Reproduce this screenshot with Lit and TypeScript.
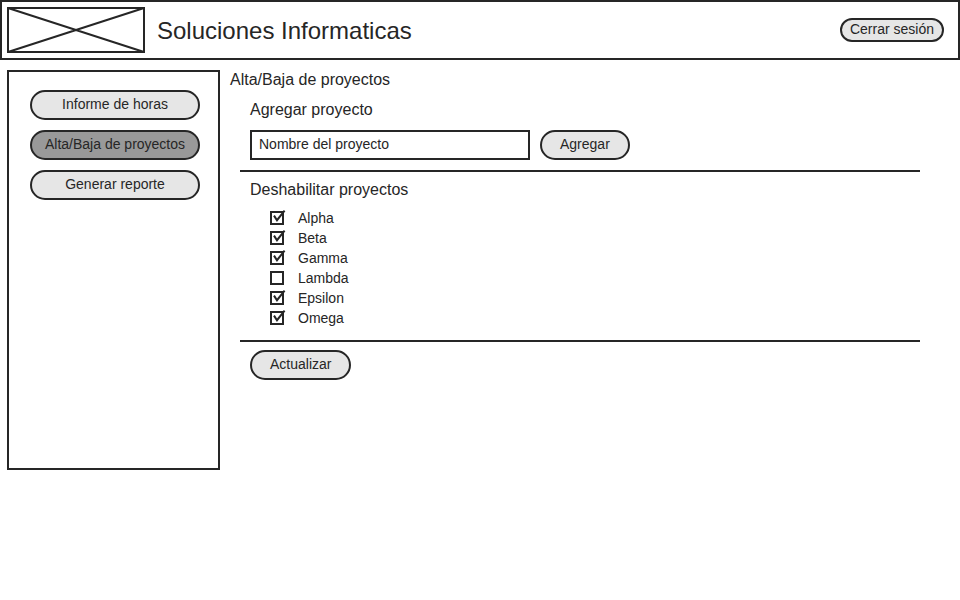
import { LitElement, html, css, svg, nothing } from "lit";
import { customElement, state } from "lit/decorators.js";

interface Project {
  id: string;
  name: string;
  checked: boolean;
}

const tick = html`<svg class="tick" viewBox="0 0 16 16" aria-hidden="true">
  ${svg`<path d="M4 6.6 L7 11.2 L14.6 1.6" />`}
</svg>`;

@customElement("app-root")
export class AppRoot extends LitElement {
  static styles = css`
    :host {
      --ink: #262626;
      --fill: #e6e6e6;
      display: block;
      color: var(--ink);
      font: 14px/20px "Liberation Sans", Arial, sans-serif;
    }
    * {
      box-sizing: border-box;
    }
    h1,
    h2,
    h3,
    ul {
      margin: 0;
      padding: 0;
      font-weight: 400;
    }
    .header {
      display: flex;
      align-items: center;
      gap: 12px;
      height: 60px;
      padding: 0 14px 0 5px;
      border: 2px solid var(--ink);
    }
    .logo {
      width: 138px;
      height: 46px;
      fill: none;
      stroke: var(--ink);
      stroke-width: 2;
    }
    .title {
      flex: 1;
      padding-top: 2px;
      font-size: 24px;
      line-height: 28px;
    }
    .btn {
      height: 30px;
      padding: 0 18px 2px;
      border: 2px solid var(--ink);
      border-radius: 15px;
      background: var(--fill);
      color: inherit;
      font: inherit;
      text-align: center;
      white-space: nowrap;
      cursor: pointer;
    }
    .btn.small {
      height: 24px;
      padding: 0 8px 2px;
      border-radius: 12px;
      line-height: 18px;
    }
    .btn.current {
      background: #999;
    }
    .body {
      display: flex;
      align-items: flex-start;
      gap: 10px;
      padding: 10px 40px 20px 7px;
    }
    .sidebar {
      display: flex;
      flex-direction: column;
      gap: 10px;
      flex: 0 0 213px;
      min-height: 400px;
      padding: 18px 18px 18px 21px;
      border: 2px solid var(--ink);
    }
    .sidebar .btn {
      padding-inline: 0;
    }
    .main {
      flex: 1;
      min-width: 0;
    }
    h2,
    h3 {
      font-size: 16px;
      line-height: 20px;
    }
    .section {
      margin-left: 10px;
      padding: 10px;
      border-bottom: 2px solid var(--ink);
    }
    .section:last-child {
      border-bottom: 0;
    }
    .section.list,
    .section.actions {
      padding-top: 8px;
    }
    .row {
      display: flex;
      gap: 10px;
      margin-top: 10px;
    }
    .field {
      flex: 0 1 280px;
      min-width: 0;
      height: 30px;
      padding: 0 7px 2px;
      border: 2px solid var(--ink);
      border-radius: 0;
      background: #fff;
      color: inherit;
      font: inherit;
    }
    .projects {
      margin: 8px 0 2px 20px;
      list-style: none;
    }
    .item {
      display: flex;
      align-items: center;
      height: 20px;
    }
    .item label {
      padding-left: 14px;
    }
    .check {
      display: grid;
      position: relative;
      width: 14px;
      height: 14px;
    }
    .check input {
      appearance: none;
      width: 14px;
      height: 14px;
      margin: 0;
      border: 2px solid var(--ink);
      background: #fff;
    }
    .tick {
      position: absolute;
      left: 0;
      bottom: 0;
      width: 16px;
      height: 16px;
      fill: none;
      stroke: var(--ink);
      stroke-width: 2;
      pointer-events: none;
    }
  `;

  @state() private projects: Project[] = [
    { id: "alpha", name: "Alpha", checked: true },
    { id: "beta", name: "Beta", checked: true },
    { id: "gamma", name: "Gamma", checked: true },
    { id: "lambda", name: "Lambda", checked: false },
    { id: "epsilon", name: "Epsilon", checked: true },
    { id: "omega", name: "Omega", checked: true },
  ];

  private toggle(id: string) {
    this.projects = this.projects.map((p) =>
      p.id === id ? { ...p, checked: !p.checked } : p
    );
  }

  render() {
    return html`
      <header class="header">
        <svg class="logo" viewBox="0 0 138 46" aria-hidden="true">
          <rect x="1" y="1" width="136" height="44" />
          <path d="M1 1 L137 45 M137 1 L1 45" />
        </svg>
        <h1 class="title">Soluciones Informaticas</h1>
        <button class="btn small" type="button">Cerrar sesión</button>
      </header>
      <div class="body">
        <nav class="sidebar">
          <button class="btn" type="button">Informe de horas</button>
          <button class="btn current" type="button" aria-current="page">Alta/Baja de proyectos</button>
          <button class="btn" type="button">Generar reporte</button>
        </nav>
        <main class="main">
          <h2>Alta/Baja de proyectos</h2>
          <section class="section">
            <h3><label for="name">Agregar proyecto</label></h3>
            <div class="row">
              <input class="field" id="name" type="text" value="Nombre del proyecto" />
              <button class="btn" type="button">Agregar</button>
            </div>
          </section>
          <section class="section list">
            <h3>Deshabilitar proyectos</h3>
            <ul class="projects">
              ${this.projects.map(
                (p) => html`<li class="item">
                  <span class="check">
                    <input
                      id=${p.id}
                      type="checkbox"
                      .checked=${p.checked}
                      @change=${() => this.toggle(p.id)}
                    />
                    ${p.checked ? tick : nothing}
                  </span>
                  <label for=${p.id}>${p.name}</label>
                </li>`
              )}
            </ul>
          </section>
          <section class="section actions">
            <button class="btn" type="button">Actualizar</button>
          </section>
        </main>
      </div>
    `;
  }
}
